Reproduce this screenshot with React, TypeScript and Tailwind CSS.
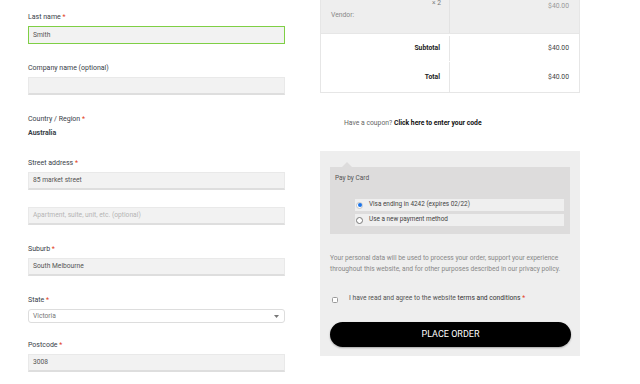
import React from "react";

const Req = () => <span className="text-[#e2401c]"> *</span>;

function Label({ children, req = true, className = "" }: { children: React.ReactNode; req?: boolean; className?: string }) {
  return (
    <div className={`text-[7px] leading-[10px] text-[#383e48] ${className}`}>
      {children}
      {req && <Req />}
    </div>
  );
}

function Input({ value, placeholder, focus = false, className = "" }: { value?: string; placeholder?: string; focus?: boolean; className?: string }) {
  return (
    <div
      className={`h-[18px] w-full flex items-center pl-[4px] text-[6.7px] bg-[#f2f2f2] ${
        focus ? "border-[1.5px] border-[#7fcf45]" : "border border-[#e9e9e9] border-b-[2px] border-b-[#dedede]"
      } ${className}`}
    >
      {value ? <span className="text-[#555]">{value}</span> : <span className="text-[#b5b5b5]">{placeholder}</span>}
    </div>
  );
}

export default function App() {
  return (
    <div className="w-[640px] h-[384px] bg-white overflow-hidden flex" style={{ fontFamily: "Roboto, 'Liberation Sans', sans-serif" }}>
      {/* Left column */}
      <div className="w-[257px] ml-[28px] pt-[12px]">
        <Label>Last name</Label>
        <Input value="Smith" focus className="mt-[4px]" />
        <Label req={false} className="mt-[19px]">Company name (optional)</Label>
        <Input className="mt-[4px]" />
        <Label className="mt-[19px]">Country / Region</Label>
        <div className="mt-[4px] text-[7px] leading-[10px] font-bold text-[#383e48]">Australia</div>
        <Label className="mt-[20px]">Street address</Label>
        <Input value="85 market street" className="mt-[4px]" />
        <Input placeholder="Apartment, suite, unit, etc. (optional)" className="mt-[17px]" />
        <Label className="mt-[19px]">Suburb</Label>
        <Input value="South Melbourne" className="mt-[4px]" />
        <Label className="mt-[19px]">State</Label>
        <div className="mt-[4px] h-[14px] w-full bg-white border border-[#dddddd] rounded-[3px] flex items-center justify-between pl-[4px] pr-[5px]">
          <span className="text-[6.7px] text-[#777]">Victoria</span>
          <svg width="5" height="3" viewBox="0 0 5 3"><path d="M0 0h5L2.5 3z" fill="#777" /></svg>
        </div>
        <Label className="mt-[17px]">Postcode</Label>
        <Input value="3008" className="mt-[4px]" />
      </div>

      {/* Right column */}
      <div className="w-[260px] ml-[35px]">
        {/* table */}
        <div className="border-b border-l border-r border-[#e6e6e6]">
          <div className="flex h-[33px] bg-[#eeeeee]">
            <div className="w-[129px] border-r border-[#e2e2e2] relative">
              <div className="absolute right-[8px] top-[-2px] text-[6.7px] text-[#777]">× 2</div>
              <div className="absolute left-[10px] top-[10px] text-[6.8px] text-[#888]">Vendor:</div>
            </div>
            <div className="flex-1 flex justify-end pr-[10px] pt-[1px]">
              <span className="text-[6.8px] text-[#999] leading-[10px]">$40.00</span>
            </div>
          </div>
          <div className="flex h-[28px] pt-[2px] border-t border-[#e6e6e6]">
            <div className="w-[129px] border-r border-[#e6e6e6] flex items-center justify-end pr-[9px] text-[6.8px] font-bold text-[#222]">Subtotal</div>
            <div className="flex-1 flex items-center justify-end pr-[10px] text-[6.8px] text-[#444]">$40.00</div>
          </div>
          <div className="flex h-[31px] pt-[1px]">
            <div className="w-[129px] border-r border-[#e6e6e6] flex items-center justify-end pr-[9px] text-[6.8px] font-bold text-[#222]">Total</div>
            <div className="flex-1 flex items-center justify-end pr-[10px] text-[6.8px] text-[#444]">$40.00</div>
          </div>
        </div>

        <div className="mt-[25px] ml-[24px] text-[6.8px] leading-[10px] text-[#666]">
          Have a coupon? <span className="font-bold text-[#111]">Click here to enter your code</span>
        </div>

        {/* payment box */}
        <div className="mt-[23px] bg-[#eeeeee] h-[205px] px-[10px] pt-[16px]">
          <div className="relative bg-[#dddcdc] h-[67px] pt-[6px]">
            <div className="absolute top-[-5px] left-[12px] w-0 h-0 border-l-[5px] border-r-[5px] border-b-[5px] border-l-transparent border-r-transparent border-b-[#dddcdc]" />
            <div className="pl-[5px] text-[6.5px] leading-[10px] text-[#555]">Pay by Card</div>
            <div className="ml-[25px] mr-[6px] mt-[16px] flex flex-col gap-[3px]">
              <div className="h-[12px] bg-[#efefef] flex items-center">
                <div className="ml-[1px] w-[7px] h-[7px] rounded-full bg-white border border-[#c6c6c6] flex items-center justify-center">
                  <div className="w-[4px] h-[4px] rounded-full bg-[#1a73e8]" />
                </div>
                <span className="ml-[6px] text-[6.4px] text-[#444]">Visa ending in 4242 (expires 02/22)</span>
              </div>
              <div className="h-[12px] bg-[#efefef] flex items-center">
                <div className="ml-[1px] w-[7px] h-[7px] rounded-full bg-white border border-[#777]" />
                <span className="ml-[6px] text-[6.4px] text-[#444]">Use a new payment method</span>
              </div>
            </div>
          </div>
          <div className="mt-[19px] text-[6.6px] leading-[11px] text-[#888]">
            Your personal data will be used to process your order, support your experience throughout this website, and for other purposes described in our privacy policy.
          </div>
          <div className="mt-[18px] flex items-center">
            <div className="ml-[2px] mt-[3px] w-[6px] h-[6px] bg-white border border-[#999] rounded-[1.5px]" />
            <span className="ml-[11px] text-[6.7px] leading-[10px] text-[#555]">
              I have read and agree to the website <span className="text-[#333]">terms and conditions</span>
              <Req />
            </span>
          </div>
          <div className="mt-[19px] h-[25px] w-[241px] rounded-full bg-black flex items-center justify-center shadow-[0_1px_2px_rgba(0,0,0,0.3)]">
            <span className="text-white text-[9px]">PLACE ORDER</span>
          </div>
        </div>
      </div>
    </div>
  );
}
